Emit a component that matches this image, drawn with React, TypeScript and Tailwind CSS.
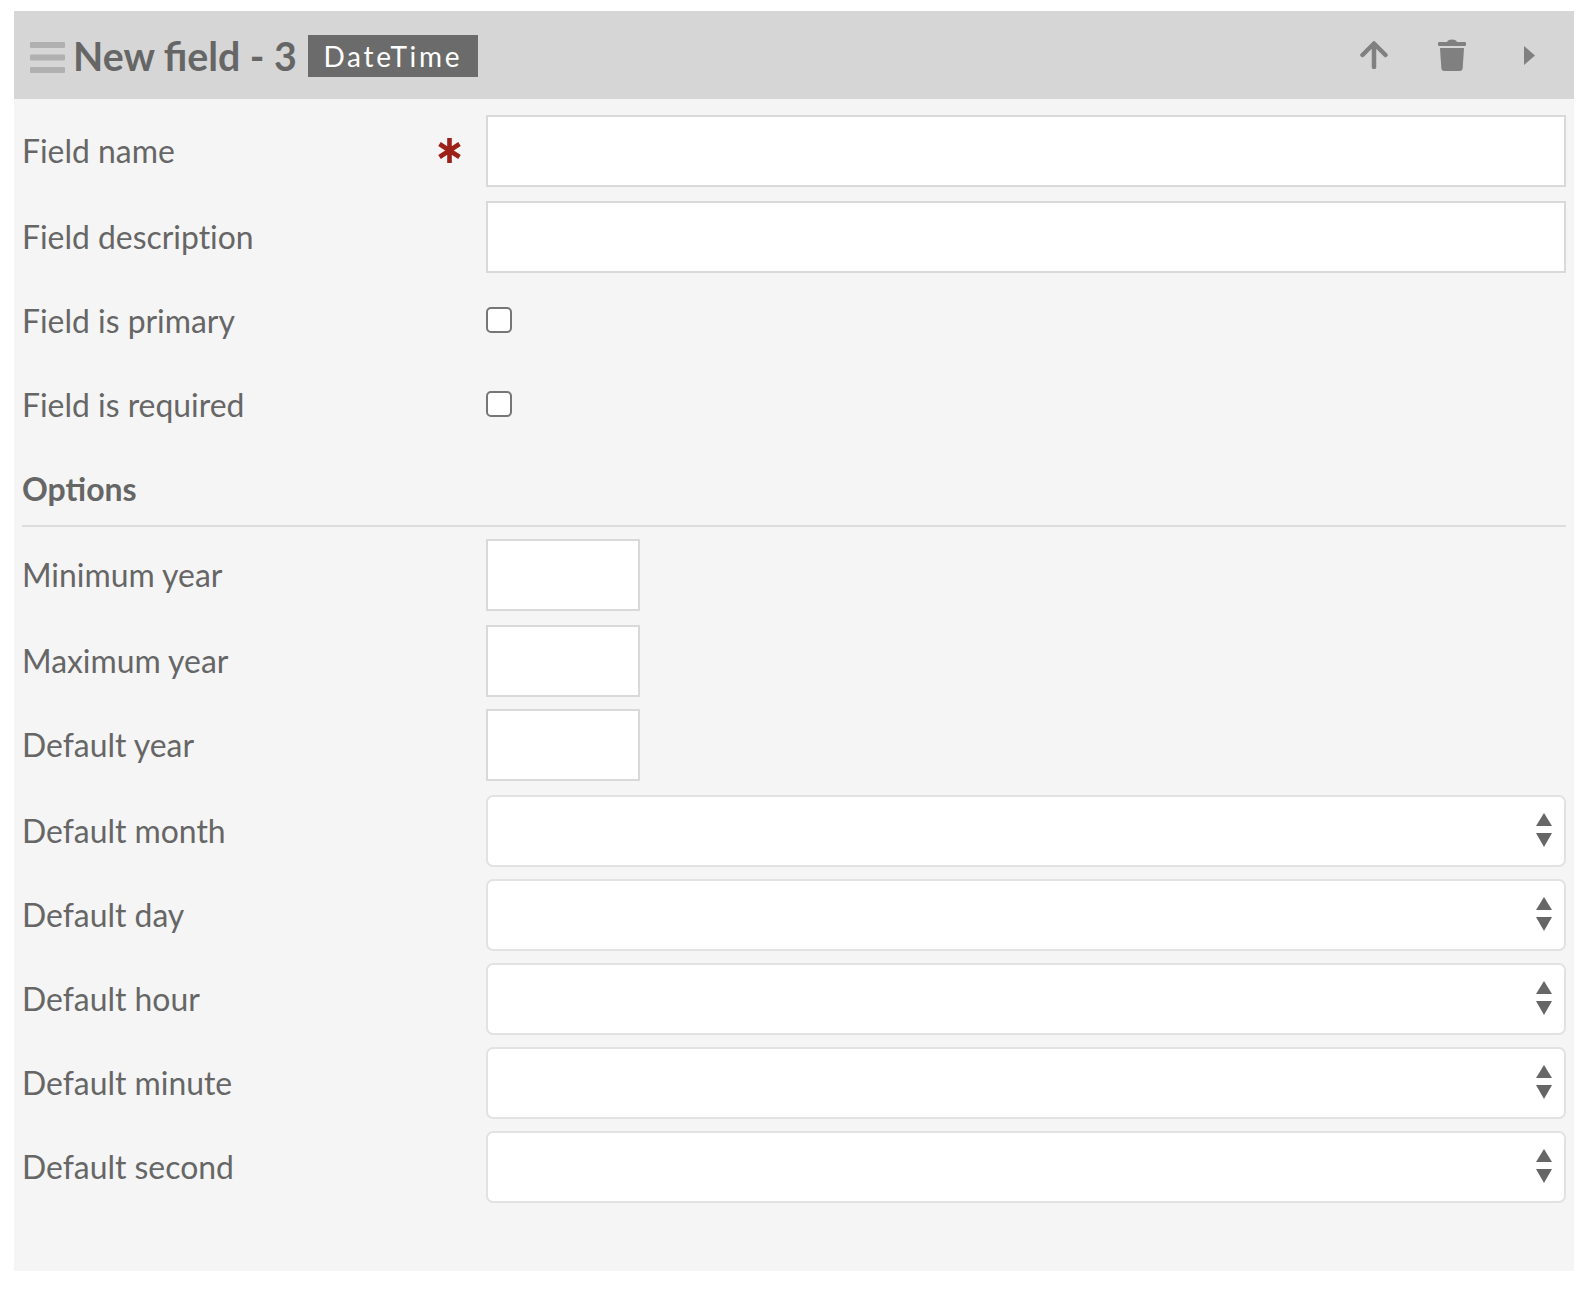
import React from "react";

const label = "w-[464px] shrink-0 text-[31.900px] leading-[40px] text-[#666666] [font-variant-ligatures:none]";

function TextRow({ name, required, short, cls }: { name: string; required?: boolean; short?: boolean; cls: string }) {
  return (
    <div className={`flex items-center h-[72px] ${cls}`}>
      <div className={`${label} relative`}>
        {name}
        {required && (
          <span className="absolute left-[416px] top-[7px] text-[#9c2118]">
            <svg width="23" height="25" viewBox="0 0 23 25" fill="none" stroke="currentColor" strokeWidth="4.6">
              <path d="M11.500 0v25M1.500 6l20 13M21.500 6l-20 13" />
            </svg>
          </span>
        )}
      </div>
      <input
        className={`h-[72px] bg-white border-2 border-[#d9d9d9] outline-none ${short ? "w-[154px]" : "w-[1080px]"}`}
        type="text"
      />
    </div>
  );
}

function CheckRow({ name, cls }: { name: string; cls: string }) {
  return (
    <div className={`flex items-center h-[40px] ${cls}`}>
      <div className={label}>{name}</div>
      <div className="w-[26px] h-[26px] -mt-[2px] rounded-[5px] border-2 border-[#767676] bg-white" />
    </div>
  );
}

function SelectRow({ name, cls }: { name: string; cls: string }) {
  return (
    <div className={`flex items-center h-[72px] ${cls}`}>
      <div className={label}>{name}</div>
      <div className="relative w-[1080px] h-[72px] bg-white border-2 border-[#e2e2e2] rounded-[7px]">
        <svg className="absolute right-[12px] top-[16px]" width="16" height="34" viewBox="0 0 16 34" fill="#666666">
          <path d="M8 0 16 13H0z" />
          <path d="M0 20h16L8 34z" />
        </svg>
      </div>
    </div>
  );
}

export default function App() {
  return (
    <div className="min-h-[1291px] bg-white pt-[11px] pl-[14px] font-['Lato','Liberation_Sans',sans-serif]">
      <div className="w-[1560px] h-[1260px] bg-[#f5f5f5]">
        <div className="flex items-center h-[88px] bg-[#d6d6d6] pl-[16px] pr-[39px]">
          <svg width="35" height="31" viewBox="0 0 35 31" fill="#b0b0b0" className="shrink-0 mt-[5px]">
            <rect x="0" y="0" width="35" height="6" rx="1" />
            <rect x="0" y="12.500" width="35" height="6" rx="1" />
            <rect x="0" y="25" width="35" height="6" rx="1" />
          </svg>
          <span className="ml-[8px] mt-[2px] text-[39.300px] leading-[48px] font-bold text-[#666666]">New field - 3</span>
          <span className="ml-[11px] mt-[2px] h-[42px] w-[170px] flex items-center justify-center bg-[#6b6b6b] text-white text-[28px] tracking-[2.700px] leading-none">
            DateTime
          </span>
          <div className="ml-auto flex items-center text-[#808080]">
            <svg width="28" height="28" viewBox="0 0 28 28" fill="none" stroke="#808080" strokeWidth="4.500" strokeLinecap="round" strokeLinejoin="round">
              <path d="M14 26V3M2.500 14 14 2.500 25.500 14" />
            </svg>
            <svg className="ml-[50px]" width="28" height="32" viewBox="0 0 28 32" fill="#808080">
              <path d="M10 1.500q4-2 8 0l1 1.500h8q1 0 1 1v2q0 1-1 1H1Q0 7 0 6V4q0-1 1-1h8z" />
              <path d="M2 9h24l-1.300 20q-.2 3-3 3H6.300q-2.800 0-3-3z" />
            </svg>
            <svg className="ml-[58px]" width="11" height="19" viewBox="0 0 11 19" fill="#808080">
              <path d="M0 0 11 9.500 0 19z" />
            </svg>
          </div>
        </div>
        <div className="pl-[8px] pr-[8px]">
          <TextRow name="Field name" required cls="mt-[16px]" />
          <TextRow name="Field description" cls="mt-[14px]" />
          <CheckRow name="Field is primary" cls="mt-[28px]" />
          <CheckRow name="Field is required" cls="mt-[44px]" />
          <div className="mt-[44px] text-[32px] leading-[40px] font-bold text-[#666666]">Options</div>
          <div className="mt-[16px] h-[2px] bg-[#dddddd]" />
          <TextRow name="Minimum year" short cls="mt-[12px]" />
          <TextRow name="Maximum year" short cls="mt-[14px]" />
          <TextRow name="Default year" short cls="mt-[12px]" />
          <SelectRow name="Default month" cls="mt-[14px]" />
          <SelectRow name="Default day" cls="mt-[12px]" />
          <SelectRow name="Default hour" cls="mt-[12px]" />
          <SelectRow name="Default minute" cls="mt-[12px]" />
          <SelectRow name="Default second" cls="mt-[12px]" />
        </div>
      </div>
    </div>
  );
}
